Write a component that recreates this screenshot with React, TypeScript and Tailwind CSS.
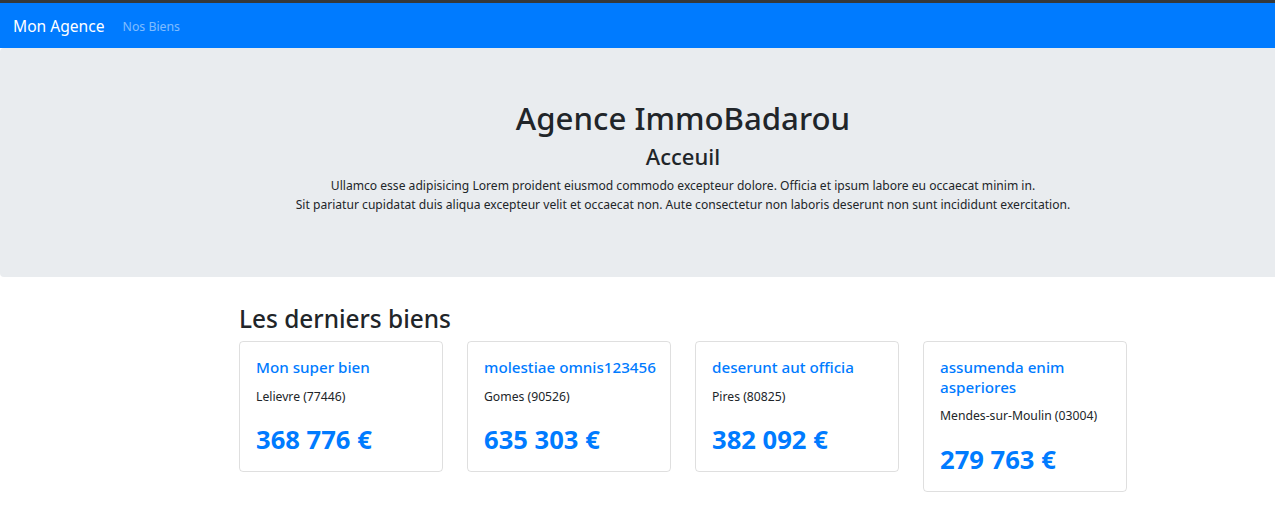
import React from "react";

const biens = [
  { title: "Mon super bien", city: "Lelievre (77446)", price: "368 776 €" },
  { title: "molestiae omnis123456", city: "Gomes (90526)", price: "635 303 €" },
  { title: "deserunt aut officia", city: "Pires (80825)", price: "382 092 €" },
  { title: "assumenda enim asperiores", city: "Mendes-sur-Moulin (03004)", price: "279 763 €" },
];

export default function App() {
  return (
    <div
      className="w-full overflow-hidden bg-white text-[#212529]"
      style={{ fontFamily: '"Noto Sans", "Open Sans", sans-serif' }}
    >
      <div className="h-[3px] bg-[#34383b]" />
      <nav className="flex h-[45px] items-center bg-[#007bff] px-[13px]">
        <span className="mr-[12px] text-[15.6px] leading-[24px] text-white">Mon Agence</span>
        <span className="mt-[3px] px-[6px] text-[12.3px] text-white/50">Nos Biens</span>
      </nav>
      <div className="w-[1366px]">
        <div className="rounded-[4px] bg-[#e9ecef] pb-[63px] pt-[51px] text-center">
          <h1 className="mb-[6px] text-[31.2px] font-medium leading-[38px]">Agence ImmoBadarou</h1>
          <h2 className="mb-[6px] text-[22px] font-medium leading-[27px]">Acceuil</h2>
          <p className="text-[12.1px] leading-[19.2px]">
            Ullamco esse adipisicing Lorem proident eiusmod commodo excepteur dolore. Officia et ipsum labore eu occaecat minim in.
            <br />
            Sit pariatur cupidatat duis aliqua excepteur velit et occaecat non. Aute consectetur non laboris deserunt non sunt incididunt exercitation.
          </p>
        </div>
        <div className="mx-auto w-[888px] pt-[26px]">
          <h2 className="mb-[7px] text-[24.4px] font-medium leading-[31px]">Les derniers biens</h2>
          <div className="flex items-start gap-[24px]">
            {biens.map((b) => (
              <div key={b.title} className="w-[204px] rounded-[4px] border border-black/[0.125] p-[16px]">
                <h5 className="mb-[9.6px] mr-[-12px] text-[15.2px] font-medium leading-[19.2px] text-[#007bff]">{b.title}</h5>
                <p className="mb-[18px] text-[12.2px] leading-[19.2px]">{b.city}</p>
                <div className="text-[25.6px] font-bold leading-[31px] text-[#007bff]">{b.price}</div>
              </div>
            ))}
          </div>
        </div>
      </div>
    </div>
  );
}
